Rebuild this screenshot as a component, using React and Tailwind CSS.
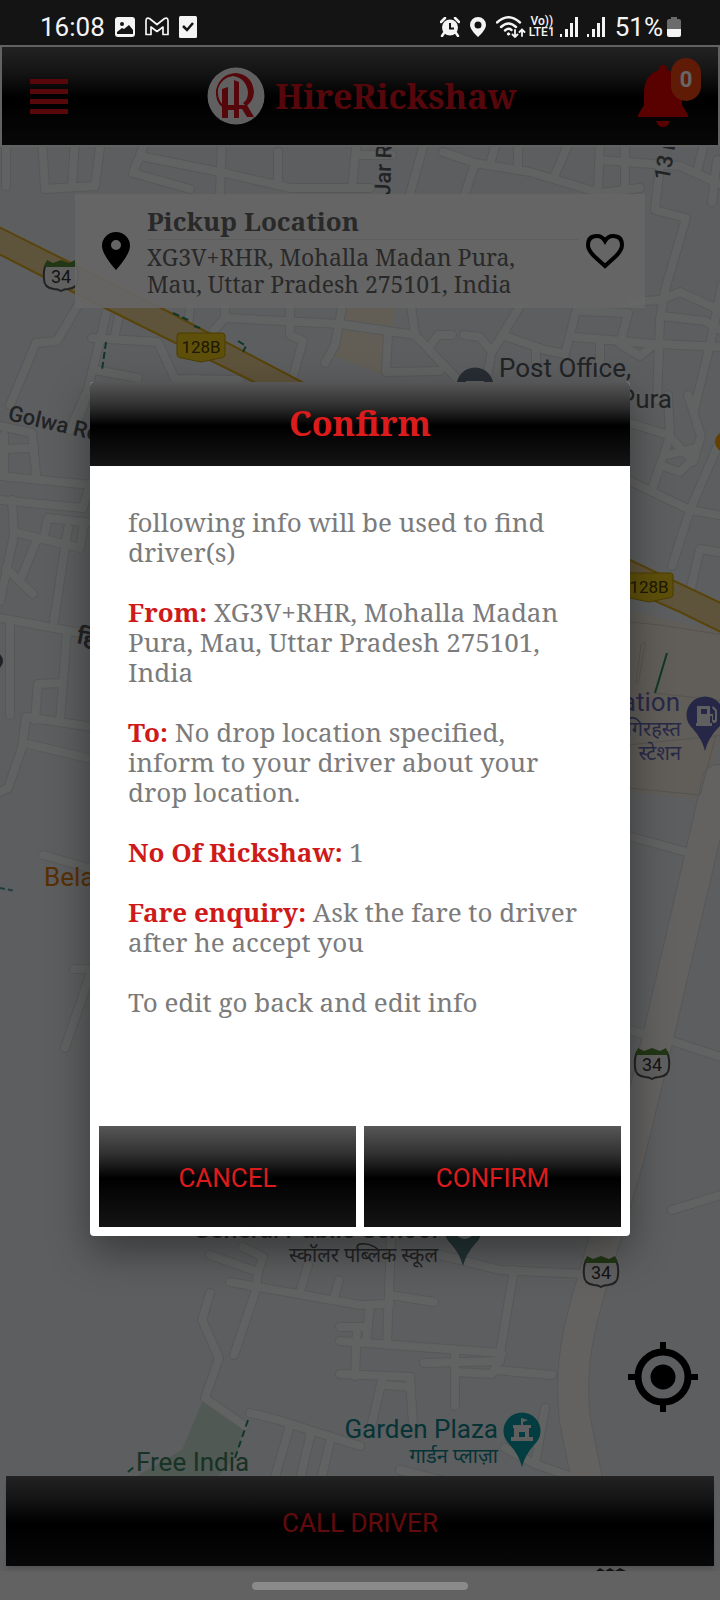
import React from "react";

const GLOSS =
  "bg-[linear-gradient(180deg,#575757_0%,#303030_28%,#000000_52%,#080808_70%,#141414_100%)]";
const SERIF = "font-['Noto_Serif','DejaVu_Serif_Condensed','DejaVu_Serif',serif]";

const ROADS = [
  "M6 140V186",
  "M42 140L45 189L95 186L101 140",
  "M75 140L72 186",
  "M146 140L133 173L190 189",
  "M140 156L220 172L290 188L370 188",
  "M222 140L220 192",
  "M278 152V182",
  "M357 140L352 186",
  "M360 155H392",
  "M425 140L410 194",
  "M443 152L475 163L530 172L600 193L640 188",
  "M475 163L465 194",
  "M490 164L497 140",
  "M518 140V168",
  "M570 140L555 175",
  "M600 140L598 192",
  "M625 140V190",
  "M600 160L680 166L720 184",
  "M705 140L697 172",
  "M717 160L712 202",
  "M660 165L655 210L686 218L665 290L660 320L657 400",
  "M630 302L660 300L680 292L724 312",
  "M662 316L705 321L724 332",
  "M722 285L710 345L694 410",
  "M78 305L57 341L36 343L10 405",
  "M108 306L100 340L84 405L78 420",
  "M119 315L115 335",
  "M92 338L158 342L175 379L240 380",
  "M95 370L138 378",
  "M190 308L188 326L220 345",
  "M225 305V318L214 330",
  "M225 318L340 324L415 335L460 382",
  "M290 305V335L303 341L292 380",
  "M342 308L335 345L325 363",
  "M411 305L415 335",
  "M388 335L386 372L440 371",
  "M430 346L438 335H452",
  "M464 335L480 337L492 352L520 306",
  "M492 350L488 372",
  "M502 335L545 350L565 354L577 308",
  "M577 311L628 313L620 344L640 356L655 344",
  "M575 337L655 344L724 347",
  "M600 341V372",
  "M536 350V362",
  "M630 423L668 435L692 460L680 472L660 465L652 490",
  "M668 395L670 436L652 490",
  "M688 395L701 436L693 462",
  "M668 455L695 448",
  "M628 480L690 510L724 516",
  "M722 436L690 510L672 566",
  "M690 592L700 549L724 553",
  "M85 395L70 430",
  "M0 426L32 433L36 474",
  "M4 435V474",
  "M0 449L34 448",
  "M0 476L92 485",
  "M0 500L83 508L90 484",
  "M12 500L14 535L0 601",
  "M14 532L80 548L84 523",
  "M44 536L48 518L92 523",
  "M37 539L22 576",
  "M6 568L33 594",
  "M68 528L54 621",
  "M0 618L92 635",
  "M10 620V715",
  "M67 632L60 721",
  "M35 720L38 684L62 683",
  "M26 717L92 727",
  "M26 717L22 748L8 788L0 792",
  "M28 744L92 759",
  "M43 855L92 869",
  "M74 969H92L65 1048",
  "M628 836L690 853",
  "M628 1030L645 1034",
  "M672 1041L724 1058",
  "M672 1210L724 1194",
  "M210 1255L258 1272L263 1257L243 1247",
  "M258 1272L256 1290L234 1355",
  "M230 1282L360 1305L390 1304",
  "M210 1293L202 1320L219 1358L205 1398L245 1426",
  "M250 1413L275 1419L360 1446",
  "M290 1426L274 1480",
  "M311 1432L300 1480",
  "M331 1438L321 1480",
  "M308 1265L300 1292",
  "M339 1280L334 1298",
  "M340 1327H366",
  "M357 1328L355 1376",
  "M391 1240L387 1345",
  "M390 1295L434 1302",
  "M370 1306L366 1342",
  "M340 1341L500 1353L514 1270",
  "M440 1255L500 1270L585 1274",
  "M424 1363L500 1361",
  "M455 1355V1406",
  "M455 1372L492 1374L502 1354",
  "M495 1370L552 1375",
  "M340 1374L410 1377L413 1425",
  "M382 1380L370 1432",
  "M386 1385L410 1387",
  "M545 1408L535 1464L575 1478",
  "M400 1470L440 1480",
  "M505 1448L535 1464",
];

const SERVICE_ROAD = "M718 780L655 1050L628 1160L606 1235C580 1320 568 1360 575 1420L589 1490";
const HIGHWAY =
  "M-5 225L75 265L165 310L298 380L630 560L725 605V634L680 612L630 590L250 380L105 308L75 293L-5 252Z";

function Shield({ x, y }) {
  return (
    <g transform={`translate(${x} ${y})`}>
      <path
        d="M-15 -12Q-18 -5 -17 3Q-17 12 -7 13Q-3 13 0 15Q3 13 7 13Q17 12 17 3Q18 -5 15 -12Z"
        fill="#f0f1f2"
        stroke="#555"
        strokeWidth="2"
      />
      <path d="M-17 -9L-14 -16L-8 -13L0 -16L8 -13L14 -16L17 -9Z" fill="#568a35" />
      <text y="7" textAnchor="middle" fontSize="18" fill="#333" className="font-[Roboto,sans-serif]">
        34
      </text>
    </g>
  );
}

function RouteBadge({ x, y }) {
  return (
    <g transform={`translate(${x} ${y})`}>
      <path
        d="M-21 -14H21Q24 -14 24 -11V7Q24 11 19 11L0 15L-19 11Q-24 11 -24 7V-11Q-24 -14 -21 -14Z"
        fill="#ecc91c"
        stroke="#b89b00"
      />
      <text y="6" textAnchor="middle" fontSize="17" fill="#4a3d00" className="font-[Roboto,sans-serif]">
        128B
      </text>
    </g>
  );
}

function Pin({ x, y, color, children }) {
  return (
    <g transform={`translate(${x} ${y})`}>
      <path d="M0 36Q-3 24 -12 14A18.500 18.500 0 1 1 12 14Q3 24 0 36Z" fill={color} />
      {children}
    </g>
  );
}

function MapCanvas() {
  return (
    <svg
      aria-label="Map"
      role="img"
      viewBox="0 147 720 1424"
      preserveAspectRatio="xMidYMin slice"
      className="absolute inset-0 h-full w-full bg-[#e9ebee] font-[Roboto,'Noto_Sans','Noto_Sans_Devanagari',sans-serif]"
    >
      <path d="M628 610L724 633V700L708 800L628 792Z" fill="#f3ebdf" />
      <path d="M345 308H395L385 375L330 355Z" fill="#f5e9d5" />
      <path d="M203 1400L243 1429L237 1455L215 1480H130L182 1450Z" fill="#c8dfd0" />
      <g fill="none" strokeLinecap="round" strokeLinejoin="round">
        <g stroke="#d6d9dc" strokeWidth="10">
          {ROADS.map((d) => (
            <path key={d} d={d} />
          ))}
          <path d={SERVICE_ROAD} strokeWidth="32" />
        </g>
        <g stroke="#f3f4f5" strokeWidth="8">
          {ROADS.map((d) => (
            <path key={d} d={d} />
          ))}
          <path d={SERVICE_ROAD} strokeWidth="30" stroke="#f7f4f2" />
        </g>
      </g>
      <path d={HIGHWAY} fill="#ecd094" stroke="#dca81c" strokeWidth="2" />
      <g fill="none" stroke="#d3d0c8">
        <path d="M628 622L660 625L724 635" />
        <path d="M636 683L641 645Q648 638 644 650L638 685M655 693L724 701" />
        <path d="M628 745L724 735M628 788L700 795L716 735" />
      </g>
      <g fill="none" stroke="#2a8a63" strokeWidth="2">
        <path d="M667 653L655 693" />
        <path d="M106 342L102 370" strokeDasharray="7 3" />
        <path d="M173 313L188 320M194 326L200 328M238 341L246 346L243 352" strokeDasharray="7 3" />
        <path d="M248 1420L235 1458M128 1472L136 1465" strokeDasharray="7 4" />
        <path d="M0 888L15 891" strokeDasharray="5 3" stroke="#4f9aa3" />
      </g>
      <circle cx="725" cy="442" r="10" fill="#f9a000" />
      <circle cx="-6" cy="661" r="9" fill="#51565c" />
      <Shield x={61} y={276} />
      <Shield x={652} y={1064} />
      <Shield x={601} y={1272} />
      <path d="M596 1571L600 1568L605 1571L610 1568L615 1571L620 1568L626 1571Z" fill="#333" />
      <RouteBadge x={201} y={347} />
      <RouteBadge x={649} y={587} />
      <g fill="#54585e" fontSize="26">
        <text x="499" y="377">Post Office,</text>
        <text x="672" y="408" textAnchor="end">Pura</text>
        <text fontSize="22" fontWeight="500" transform="translate(390 196) rotate(-88)">Jar Rd</text>
        <text fontSize="22" fontWeight="500" transform="translate(669 181) rotate(-80)">13 r</text>
        <text fontSize="22" fontWeight="500" transform="translate(7 420) rotate(13)">Golwa Rd</text>
        <text fontSize="22" fontWeight="700" transform="translate(76 643) rotate(12)">हि</text>
        <text x="438" y="1238" textAnchor="end" fontSize="25" fontWeight="500">General Public School</text>
        <text x="438" y="1262" textAnchor="end" fontSize="20">स्कॉलर पब्लिक स्कूल</text>
      </g>
      <g fill="#6468b4" fontSize="26">
        <text x="680" y="711" textAnchor="end">ation</text>
        <text x="681" y="736" textAnchor="end" fontSize="20">गिरहस्त</text>
        <text x="681" y="760" textAnchor="end" fontSize="20">स्टेशन</text>
      </g>
      <text x="44" y="886" fontSize="26" fill="#d9780a">Bela</text>
      <text x="136" y="1471" fontSize="26" fill="#3d7d5b">Free India</text>
      <g fill="#0f8088" fontSize="26">
        <text x="498" y="1438" textAnchor="end">Garden Plaza</text>
        <text x="498" y="1463" textAnchor="end" fontSize="20">गार्डन प्लाज़ा</text>
      </g>
      <Pin x={475} y={386} color="#62707f">
        <path d="M-9 -5H9V8H-9Z" fill="#e9ebee" />
      </Pin>
      <Pin x={463} y={1230} color="#587f84">
        <path d="M-8 3Q0 13 9 6V1H-8Z" fill="#fff" />
      </Pin>
      <Pin x={705} y={715} color="#5f63b0">
        <path
          d="M-8 -9H5V8H7V11H-9V8H-8ZM-4 -6V-1H2V-6ZM8 -9L12 -5V5Q12 8 9 8Q7 8 7 5V1H5V-1H8V5H10V-4L7 -7Z"
          fill="#eee"
          fillRule="evenodd"
        />
      </Pin>
      <Pin x={522} y={1431} color="#0a9aa3">
        <path
          d="M-1 -13L6 -11L1 -9V-6H9V-3H7V6H11V10H-11V6H-8V-3H-9V-6H-1ZM-3 1V6H3V1Z"
          fill="#eee"
          fillRule="evenodd"
        />
      </Pin>
    </svg>
  );
}

function Signal() {
  return (
    <svg viewBox="0 0 18 20" className="h-5 w-[18px]" fill="#f4f4f4" aria-hidden="true">
      <path d="M0 17h2v3H0zM5 12h3v8H5zM10 6h3v14h-3zM15 0h3v20h-3z" />
    </svg>
  );
}

function StatusBar() {
  return (
    <div className="flex h-[45px] items-center justify-between bg-[#141414] pt-2 pr-[39px] pl-10 font-[Roboto,sans-serif] text-[26px] leading-8 text-[#f4f4f4]">
      <div className="flex items-center gap-[10px]">
        <span>16:08</span>
        <svg viewBox="0 0 20 20" className="h-5 w-5" aria-hidden="true">
          <rect width="20" height="20" rx="3" fill="#f4f4f4" />
          <circle cx="7" cy="7" r="2" fill="#141414" />
          <path d="M2 17V15L7 11L9 12L14 8L18 13V17Z" fill="#141414" />
        </svg>
        <svg viewBox="0 0 24 19" className="h-[19px] w-6" fill="none" stroke="#f4f4f4" strokeWidth="1.700" strokeLinejoin="round" aria-hidden="true">
          <path d="M1 17.500V3.500Q1.500 0 4.500 1.500L12 7.500L19.500 1.500Q22.500 0 23 3.500V17.500H18V10L12 14.500L6 10V17.500Z" />
        </svg>
        <svg viewBox="0 0 18 22" className="h-[22px] w-[18px]" aria-hidden="true">
          <rect width="18" height="22" rx="1.500" fill="#f4f4f4" />
          <path d="M4 10L8 14L14 7" fill="none" stroke="#141414" strokeWidth="2.500" />
        </svg>
      </div>
      <div className="flex items-center">
        <svg viewBox="0 0 20 20" className="mr-[10px] h-5 w-5" aria-hidden="true">
          <circle cx="10" cy="10.500" r="8" fill="#f4f4f4" />
          <path d="M1 5L5 1M19 5L15 1M4 16L2 19M16 16L18 19" stroke="#f4f4f4" strokeWidth="2.500" strokeLinecap="round" />
          <path d="M10 6V11.500H14" fill="none" stroke="#141414" strokeWidth="2" />
        </svg>
        <svg viewBox="0 0 16 20" className="mr-[10px] h-5 w-4" aria-hidden="true">
          <path fillRule="evenodd" fill="#f4f4f4" d="M8 0A8 8 0 0 0 0 8C0 13 8 20 8 20S16 13 16 8A8 8 0 0 0 8 0ZM8 4.500A3.500 3.500 0 1 1 8 11.500A3.500 3.500 0 1 1 8 4.500Z" />
        </svg>
        <svg viewBox="0 0 30 22" className="mr-[3px] h-[22px] w-[30px]" fill="none" stroke="#f4f4f4" strokeWidth="2.400" strokeLinecap="round" aria-hidden="true">
          <path d="M1 6.500Q12.500 -4 24 6.500M5 11Q12.500 4 20 11M9 14.500Q12.500 11.500 15.500 14" />
          <circle cx="12.500" cy="18" r="1.200" fill="#f4f4f4" strokeWidth="1" />
          <path d="M19 14V21M16.500 18.500L19 21L21.500 18.500M26 20V13.500M23.500 16L26 13.500L28.500 16" strokeWidth="1.800" />
        </svg>
        <span className="mr-[5px] flex flex-col items-center text-[12px] leading-[11px] font-medium">
          <span>Vo))</span>
          <span>LTE1</span>
        </span>
        <Signal />
        <span className="w-[9px]" />
        <Signal />
        <span className="mr-1 ml-[10px]">51%</span>
        <svg viewBox="0 0 14 20" className="h-5 w-[14px]" aria-hidden="true">
          <path d="M4 0H10V2H12Q14 2 14 4V12H0V4Q0 2 2 2H4Z" fill="#6b6b6b" />
          <path d="M0 12H14V18Q14 20 12 20H2Q0 20 0 18Z" fill="#f4f4f4" />
        </svg>
      </div>
    </div>
  );
}

function Logo() {
  return (
    <svg viewBox="0 0 58 58" className="h-[58px] w-[58px]" aria-hidden="true">
      <circle cx="29" cy="29" r="28.500" fill="#f2f0f0" />
      <path
        fillRule="evenodd"
        d="M15 40Q8 34 9 23Q13 7 29 6Q46 8 47 26Q46 35 39 39L36 36Q41 33 41 25Q39 11 26 9Q14 11 11 22Q10 31 15 37Z"
        fill="#d8121c"
      />
      <path d="M15 22L21 20V38H27V13L32 15V38H40L47 50H40L35 42H32V51H27V43H21V51H15Z" fill="#d8121c" />
    </svg>
  );
}

function Header() {
  return (
    <header
      className={`relative grid h-[102px] grid-cols-[1fr_auto_1fr] items-center border-2 border-[#f4f4f4] pr-6 pl-7 ${GLOSS}`}
    >
      <button type="button" aria-label="Menu" className="flex w-[38px] flex-col gap-[5px]">
        <span className="h-[5px] bg-[#dc161d]" />
        <span className="h-[5px] bg-[#dc161d]" />
        <span className="h-[5px] bg-[#dc161d]" />
        <span className="h-[5px] bg-[#dc161d]" />
      </button>
      <div className="flex items-center gap-[10px]">
        <Logo />
        <h1 className={`${SERIF} text-[34px] leading-10 font-bold text-[#d8121c]`}>HireRickshaw</h1>
      </div>
      <button type="button" aria-label="Notifications" className="relative flex w-[56px] justify-self-end">
        <svg viewBox="0 0 50 62" className="h-[62px] w-[50px]" fill="#de0000" aria-hidden="true">
          <path d="M25 0Q29 0 29 5Q44 10 44 28V40L50 50V52H0V50L6 40V28Q6 10 21 5Q21 0 25 0ZM18 56H32Q30 62 25 62T18 56Z" />
        </svg>
        <span className="absolute -top-[7px] -right-[7px] flex h-[43px] w-[30px] items-center justify-center rounded-full bg-[#f04412] font-[Roboto,sans-serif] text-[22px] font-bold text-white">
          0
        </span>
      </button>
    </header>
  );
}

function PickupCard() {
  return (
    <section className="mx-[69px] mt-[47px] flex h-[114px] items-center bg-white/90 pr-[21px] pl-[27px]">
      <svg viewBox="0 0 28 38" className="h-[38px] w-7 shrink-0" aria-hidden="true">
        <path fillRule="evenodd" d="M14 0A14 14 0 0 0 0 14C0 23 14 38 14 38S28 23 28 14A14 14 0 0 0 14 0ZM14 8A5 5 0 1 1 14 18A5 5 0 1 1 14 8Z" />
      </svg>
      <div className={`${SERIF} ml-[17px] flex-1 text-[#666666]`}>
        <h2 className="border-b border-[#e8e8e8] pb-[2px] text-[26px] leading-8 font-bold">Pickup Location</h2>
        <p className="pt-1 text-[23px] leading-[27px] whitespace-nowrap">
          XG3V+RHR, Mohalla Madan Pura,
          <br />
          Mau, Uttar Pradesh 275101, India
        </p>
      </div>
      <button type="button" aria-label="Save location" className="ml-2 shrink-0">
        <svg viewBox="0 0 38 35" className="h-[35px] w-[38px]" fill="none" stroke="#000" strokeWidth="4" aria-hidden="true">
          <path d="M19 32L8 22Q2 16 2 11Q2 2 11 2Q16 2 19 7Q22 2 27 2Q36 2 36 11Q36 16 30 22Z" />
        </svg>
      </button>
    </section>
  );
}

function Field({ label, children }) {
  return (
    <p>
      <strong className="font-bold text-[#cf1a1a]">{label}</strong> {children}
    </p>
  );
}

function ConfirmDialog() {
  return (
    <div className="absolute inset-0 flex items-center justify-center bg-black/60 pb-[28px]">
      <div
        role="dialog"
        aria-modal="true"
        aria-labelledby="confirm-title"
        className="w-3/4 overflow-hidden rounded-[4px] bg-white shadow-[0_16px_40px_rgba(0,0,0,0.4)]"
      >
        <h2
          id="confirm-title"
          className={`${SERIF} ${GLOSS} flex h-[84px] items-center justify-center text-[34px] font-bold text-[#dc1c1c]`}
        >
          Confirm
        </h2>
        <div className={`${SERIF} flex flex-col gap-[30px] px-[38px] pt-[41px] pb-[109px] text-[26px] leading-[30px] text-[#7b7b7b]`}>
          <p>following info will be used to find driver(s)</p>
          <Field label="From:">XG3V+RHR, Mohalla Madan Pura, Mau, Uttar Pradesh 275101, India</Field>
          <Field label="To:">No drop location specified, inform to your driver about your drop location.</Field>
          <Field label="No Of Rickshaw:">1</Field>
          <Field label="Fare enquiry:">Ask the fare to driver after he accept you</Field>
          <p>To edit go back and edit info</p>
        </div>
        <div className="grid grid-cols-2 gap-2 px-[9px] pb-[9px] font-[Roboto,sans-serif] text-[26px] text-[#dc1c1c]">
          <button type="button" className={`h-[101px] pt-1 ${GLOSS}`}>CANCEL</button>
          <button type="button" className={`h-[101px] pt-1 ${GLOSS}`}>CONFIRM</button>
        </div>
      </div>
    </div>
  );
}

export default function App() {
  return (
    <div className="flex min-h-screen flex-col bg-white">
      <StatusBar />
      <div className="relative flex flex-1 flex-col">
        <Header />
        <main className="relative flex flex-1 flex-col px-[6px] pb-[5px]">
          <MapCanvas />
          <div className="relative flex flex-1 flex-col">
            <PickupCard />
            <div className="flex-1" />
            <button type="button" aria-label="My location" className="mr-4 mb-[64px] self-end">
              <svg viewBox="0 0 70 70" className="h-[70px] w-[70px]" aria-hidden="true">
                <circle cx="35" cy="35" r="25" fill="none" stroke="#000" strokeWidth="7" />
                <circle cx="35" cy="35" r="12.500" />
                <path d="M32 0H38V10H32ZM32 60H38V70H32ZM0 32H10V38H0ZM60 32H70V38H60Z" />
              </svg>
            </button>
            <button
              type="button"
              className={`h-[90px] w-full pt-1 font-[Roboto,sans-serif] text-[26px] text-[#f01c22] shadow-md ${GLOSS}`}
            >
              CALL DRIVER
            </button>
          </div>
        </main>
        <div className="h-[29px] bg-[#f5f5f5]" />
        <ConfirmDialog />
        <div className="absolute bottom-[10px] left-[35%] h-2 w-[30%] rounded-full bg-[#8a8a8a]" />
      </div>
    </div>
  );
}
